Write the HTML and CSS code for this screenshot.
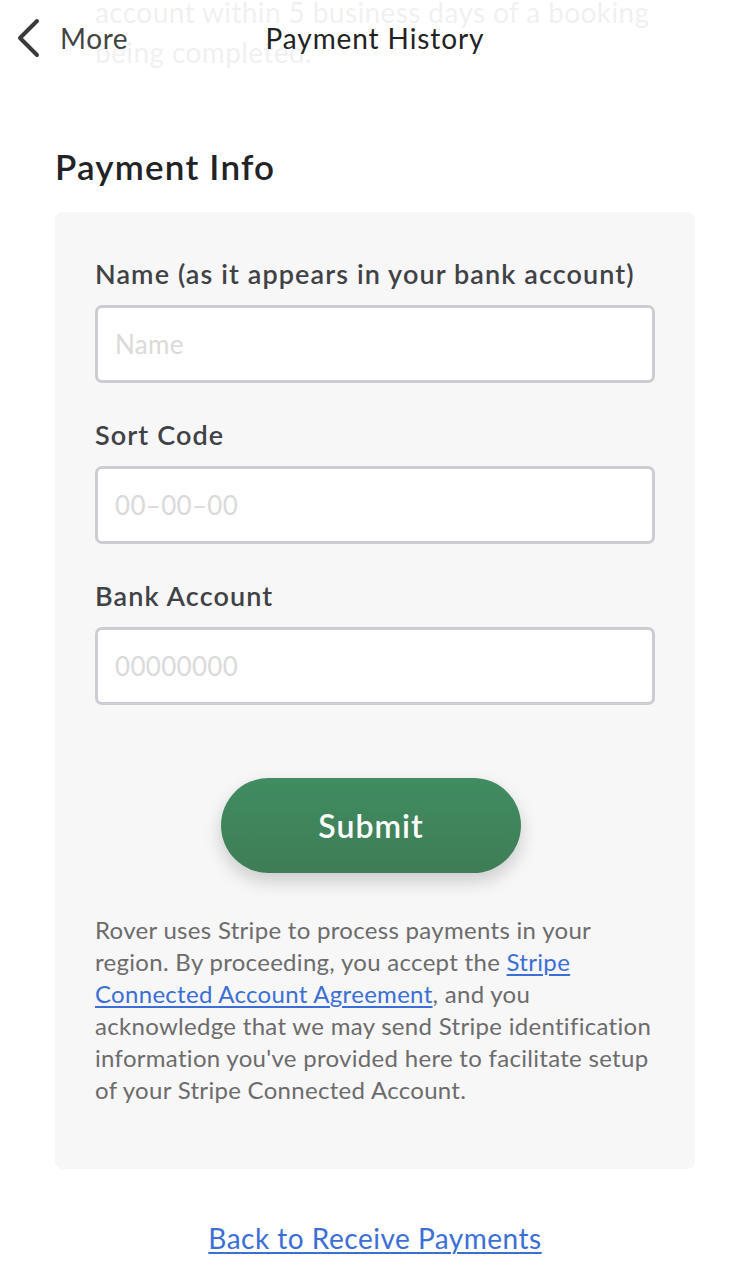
FILE: index.html
```html
<!DOCTYPE html>
<html lang="en">
<head>
<meta charset="utf-8">
<title>Payment Info</title>
<link rel="stylesheet" href="styles.css">
</head>
<body>
<div class="page">
  <p class="scrolled">account within 5 business days of a booking being completed.</p>

  <h1 class="title">Payment Info</h1>

  <form class="card">
    <label class="field">
      <span class="label">Name (as it appears in your bank account)</span>
      <input class="input" type="text" placeholder="Name">
    </label>
    <label class="field">
      <span class="label">Sort Code</span>
      <input class="input" type="text" placeholder="00–00–00">
    </label>
    <label class="field">
      <span class="label">Bank Account</span>
      <input class="input" type="text" placeholder="00000000">
    </label>
    <div class="actions">
      <button class="submit" type="button">Submit</button>
    </div>
    <p class="legal">Rover uses Stripe to process payments in your region. By proceeding, you accept the <a href="#" class="link">Stripe Connected Account Agreement</a>, and you acknowledge that we may send Stripe identification information you've provided here to facilitate setup of your Stripe Connected Account.</p>
  </form>

  <div class="back">
    <a href="#" class="link back-link">Back to Receive Payments</a>
  </div>
</div>

<header class="nav">
  <a href="#" class="nav-back">
    <svg class="chevron" width="26" height="40" viewBox="0 0 26 40" aria-hidden="true">
      <path d="M22 3 L5 20 L22 37" fill="none" stroke="#3a3a3a" stroke-width="4" stroke-linecap="round" stroke-linejoin="round"/>
    </svg>
    <span class="nav-more">More</span>
  </a>
  <div class="nav-title">Payment History</div>
  <div></div>
</header>
</body>
</html>
```

FILE: styles.css
```css
* { box-sizing: border-box; }

html, body {
  margin: 0;
  padding: 0;
  background: #ffffff;
}

body {
  font-family: Lato, "Liberation Sans", sans-serif;
  color: #222;
  position: relative;
  width: 750px;
  height: 1280px;
  overflow: hidden;
}

.page {
  padding: 0 55px;
}

.scrolled {
  margin: -8px 0 0 0;
  padding: 0 40px;
  font-size: 28px;
  line-height: 40px;
  letter-spacing: 0.4px;
  color: #6b6b6b;
  width: 640px;
}

.title {
  margin: 74px 0 26px 0;
  font-size: 35px;
  line-height: 40px;
  font-weight: 600;
  letter-spacing: 1.2px;
  color: #222326;
}

.card {
  background: #f7f7f7;
  border-radius: 8px;
  padding: 46px 39px 63px 40px;
  margin: 0;
}

.field {
  display: flex;
  flex-direction: column;
  margin-bottom: 36px;
  margin-right: 1px;
}

.field:last-of-type {
  margin-bottom: 0;
}

.label {
  font-size: 27px;
  line-height: 32px;
  font-weight: 600;
  letter-spacing: 1.1px;
  color: #404246;
  margin-bottom: 15px;
}

.input {
  height: 78px;
  width: 100%;
  border: 3px solid #cbcdd2;
  border-radius: 7px;
  background: #ffffff;
  padding: 0 17px;
  font-family: Lato, "Liberation Sans", sans-serif;
  font-size: 26px;
  letter-spacing: 0.3px;
  color: #333;
  outline: none;
}

.input::placeholder {
  color: #dadada;
}

.actions {
  display: flex;
  justify-content: center;
  margin-top: 73px;
  padding-right: 9px;
}

.submit {
  width: 300px;
  height: 95px;
  border: none;
  border-radius: 48px;
  background: linear-gradient(180deg, #418c62 0%, #3e7d56 100%);
  box-shadow: 0 8px 18px rgba(0, 0, 0, 0.18);
  color: #ffffff;
  font-family: Lato, "Liberation Sans", sans-serif;
  font-size: 32px;
  font-weight: 600;
  letter-spacing: 1px;
  cursor: pointer;
}

.legal {
  margin: 41px 0 0 0;
  font-size: 24px;
  line-height: 32px;
  letter-spacing: 0.3px;
  color: #6c6c6c;
}

.link {
  color: #3b6fd6;
  text-decoration: underline;
  text-underline-offset: 3px;
  text-decoration-thickness: 2px;
}

.back {
  text-align: center;
  margin-top: 49px;
  font-size: 28px;
  line-height: 40px;
  letter-spacing: 0.5px;
}

.nav {
  position: absolute;
  top: 0;
  left: 0;
  right: 0;
  height: 84px;
  background: rgba(255, 255, 255, 0.9);
  display: grid;
  grid-template-columns: 1fr auto 1fr;
  align-items: start;
  padding: 18px 0 0 0;
}

.nav-back {
  display: flex;
  align-items: center;
  text-decoration: none;
  padding-left: 15px;
  height: 40px;
}

.chevron {
  display: block;
  margin-right: 19px;
}

.nav-more {
  font-size: 28px;
  line-height: 40px;
  letter-spacing: 0.6px;
  color: #444;
}

.nav-title {
  font-size: 28px;
  line-height: 40px;
  letter-spacing: 0.9px;
  color: #222;
}
```
